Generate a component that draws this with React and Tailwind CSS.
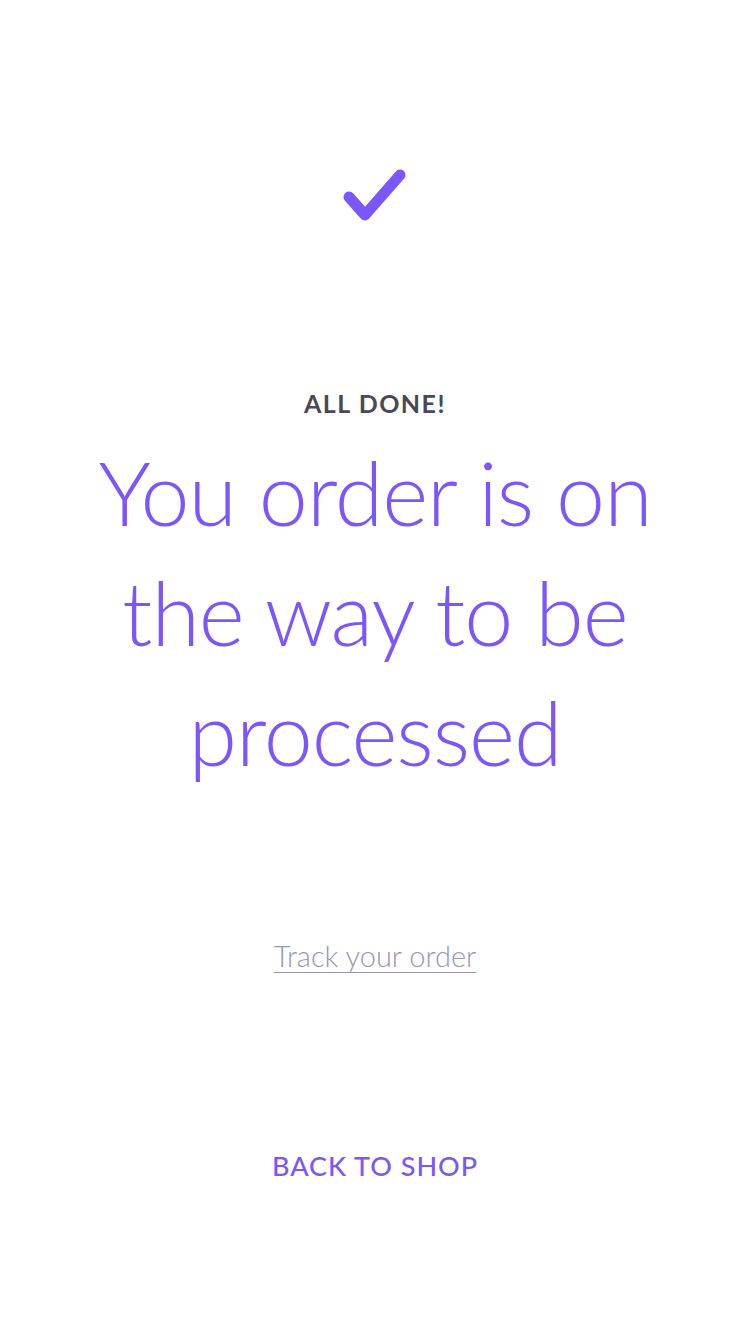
import React from 'react';

function CheckMark() {
  return (
    <svg width="66" height="58" viewBox="0 0 66 58" fill="none">
      <path
        d="M7 29 L23 47 L58 7"
        stroke="#7b57fb"
        strokeWidth="11"
        strokeLinecap="round"
        strokeLinejoin="round"
      />
    </svg>
  );
}

export default function App() {
  return (
    <div
      className="w-[750px] h-[1334px] bg-white flex flex-col items-center"
      style={{ fontFamily: 'Lato, "Open Sans", sans-serif' }}
    >
      {/* Check icon */}
      <div className="pt-[168px]">
        <CheckMark />
      </div>

      {/* Heading */}
      <div className="mt-[161px] text-[25px] font-bold tracking-[1.5px] text-[#4a4856] leading-[32px]">
        ALL DONE!
      </div>
      <h1 className="mt-[13px] text-center text-[88px] font-light leading-[120px] text-[#7b57fb] tracking-[-1px]">
        You order is on
        <br />
        the way to be
        <br />
        processed
      </h1>

      {/* Track link */}
      <a
        href="#"
        className="mt-[144px] text-[29px] font-light text-[#9896b4] underline underline-offset-[5px] decoration-1 leading-[40px]"
      >
        Track your order
      </a>

      {/* Back button */}
      <button className="mt-[170px] text-[27px] font-medium tracking-[1px] text-[#7b57fb] leading-[40px]">
        BACK TO SHOP
      </button>
    </div>
  );
}
